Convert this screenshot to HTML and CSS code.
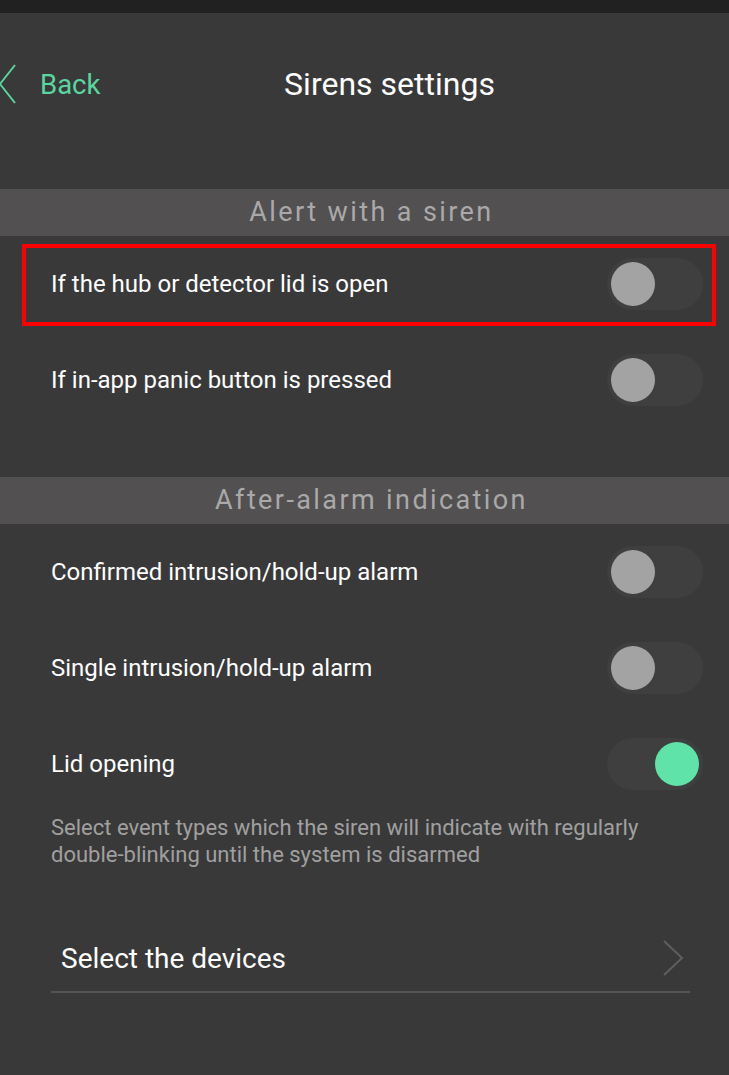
FILE: index.html
```html
<!DOCTYPE html>
<html lang="en">
<head>
    <meta charset="UTF-8">
    <meta name="viewport" content="width=device-width, initial-scale=1.0">
    <title>Sirens settings</title>
    <link rel="stylesheet" href="styles.css">
</head>
<body>
    <div class="status-bar"></div>

    <div class="nav">
        <div class="back">
            <svg class="back-icon" width="18" height="40" viewBox="0 0 18 40">
                <polyline points="15,1 0,20 15,39" fill="none" stroke="#5ad6a0" stroke-width="2"/>
            </svg>
            <span>Back</span>
        </div>
        <div class="title">Sirens settings</div>
    </div>

    <div class="section-title first">Alert with a siren</div>
    <div class="row highlight">
        <span class="label">If the hub or detector lid is open</span>
        <div class="toggle"><div class="knob"></div></div>
    </div>
    <div class="row">
        <span class="label">If in-app panic button is pressed</span>
        <div class="toggle"><div class="knob"></div></div>
    </div>

    <div class="section-title">After-alarm indication</div>
    <div class="row">
        <span class="label">Confirmed intrusion/hold-up alarm</span>
        <div class="toggle"><div class="knob"></div></div>
    </div>
    <div class="row">
        <span class="label">Single intrusion/hold-up alarm</span>
        <div class="toggle"><div class="knob"></div></div>
    </div>
    <div class="row">
        <span class="label">Lid opening</span>
        <div class="toggle on"><div class="knob"></div></div>
    </div>
    <p class="hint">Select event types which the siren will indicate with regularly double-blinking until the system is disarmed</p>

    <div class="link-row">
        <span>Select the devices</span>
        <svg width="22" height="36" viewBox="0 0 22 36">
            <polyline points="2,1 20,18 2,35" fill="none" stroke="#5e5e5e" stroke-width="2"/>
        </svg>
    </div>
</body>
</html>
```

FILE: styles.css
```css
body {
    margin: 0;
    background: #393939;
    font-family: Roboto, "Liberation Sans", sans-serif;
    color: #fff;
    overflow: hidden;
}

.status-bar {
    height: 13px;
    background: #212121;
}

.nav {
    height: 142px;
    display: flex;
    align-items: center;
    position: relative;
}

.back {
    display: flex;
    align-items: center;
    gap: 22px;
    color: #5ad6a0;
    font-size: 27.5px;
}

.title {
    position: absolute;
    left: 0;
    right: 0;
    text-align: center;
    font-size: 32px;
    padding-left: 50px;
    pointer-events: none;
}

.section-title {
    height: 47px;
    line-height: 47px;
    background: #525051;
    color: #a9a9a9;
    text-align: center;
    font-size: 27px;
    letter-spacing: 2.4px;
    padding-left: 14px;
    margin-top: 49px;
}

.section-title.first {
    margin-top: 34px;
}

.row {
    height: 96px;
    display: flex;
    align-items: center;
    justify-content: space-between;
    padding: 0 26px 0 51px;
    position: relative;
    font-size: 24px;
}

.highlight::after {
    content: '';
    position: absolute;
    left: 22px;
    right: 13px;
    top: 8px;
    bottom: 6px;
    border: 4px solid #ff0000;
}

.toggle {
    width: 96px;
    height: 52px;
    border-radius: 26px;
    background: #3f3f3f;
    display: flex;
    align-items: center;
    padding: 0 4px;
    box-sizing: border-box;
}

.knob {
    width: 44px;
    height: 44px;
    border-radius: 50%;
    background: #a3a3a3;
}

.toggle.on {
    justify-content: flex-end;
}

.toggle.on .knob {
    background: #5fe3a8;
}

.hint {
    margin: 2px 0 0;
    padding: 0 60px 0 51px;
    color: #a0a0a0;
    font-size: 22px;
    line-height: 27px;
}

.link-row {
    margin: 57px 39px 0 51px;
    height: 66px;
    display: flex;
    align-items: center;
    justify-content: space-between;
    padding: 0 6px 0 10px;
    border-bottom: 2px solid #555;
    font-size: 28px;
}
```
